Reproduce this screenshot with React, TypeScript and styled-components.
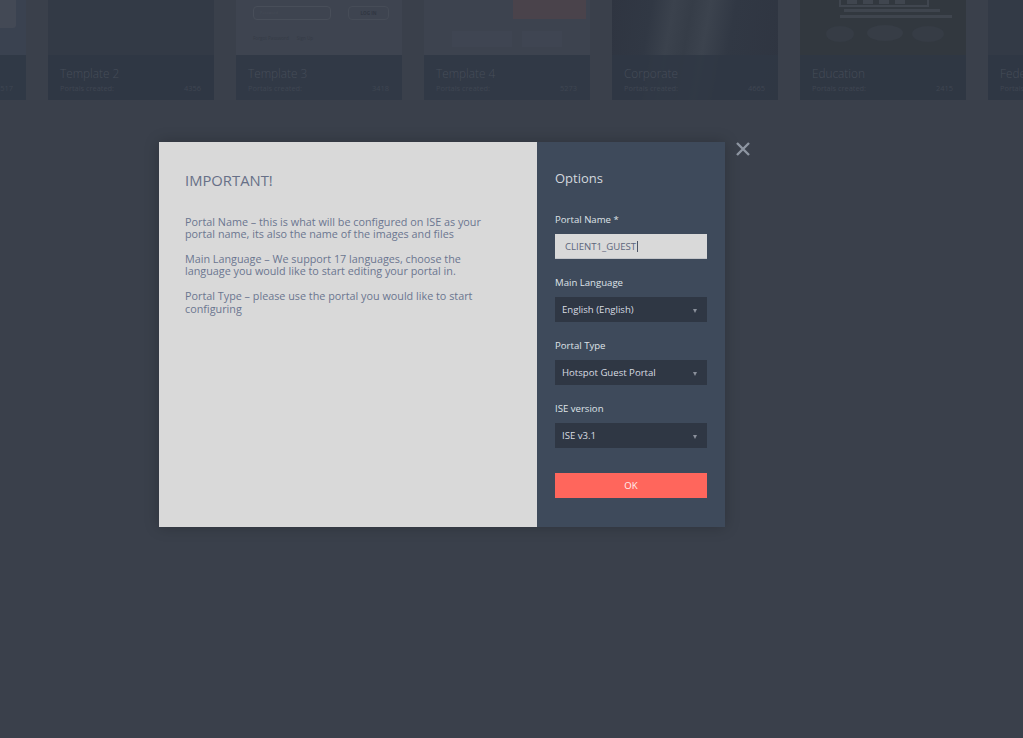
import React from "react";
import styled, { createGlobalStyle } from "styled-components";

const GlobalStyle = createGlobalStyle`
  html, body {
    margin: 0;
    padding: 0;
    background: #3a404b;
  }
  body {
    font-family: "Open Sans", "Liberation Sans", sans-serif;
    overflow: hidden;
  }
  * { box-sizing: border-box; }
`;

const Page = styled.div`
  position: relative;
  width: 1023px;
  height: 738px;
  overflow: hidden;
  background: #3a404b;
`;

/* ---------- background gallery ---------- */

const Gallery = styled.div`
  display: flex;
  gap: 22px;
  margin-left: -140px;
`;

const Card = styled.div<{ $bg: string }>`
  flex: 0 0 166px;
  height: 100px;
  display: flex;
  flex-direction: column;
  background: ${(p) => p.$bg};
  overflow: hidden;
`;

const Art = styled.div`
  height: 55px;
  display: flex;
  flex-direction: column;
`;

const Info = styled.div`
  flex: 1;
  padding: 11px 13px 0 12px;
  background: rgba(47, 55, 68, 0.85);
`;

const CardTitle = styled.div`
  font-size: 11.8px;
  line-height: 15px;
  font-weight: 300;
  color: #464d59;
  white-space: nowrap;
`;

const CardMeta = styled.div`
  display: flex;
  justify-content: space-between;
  margin-top: 1.6px;
  font-size: 7.4px;
  line-height: 10px;
  color: #3f4652;
  white-space: nowrap;
`;

/* card 1 thumbnail */
const PanelThumb = styled.div`
  width: 156px;
  height: 28px;
  background: #434955;
  border-bottom-right-radius: 3px;
`;

/* card 3 thumbnail : login form */
const LoginRow = styled.div`
  display: flex;
  gap: 17px;
  padding: 6px 0 0 17px;
`;

const MiniInput = styled.div`
  width: 78px;
  height: 14px;
  border: 1px solid #484e59;
  border-radius: 4px;
  font-size: 4px;
  line-height: 12px;
  padding-left: 6px;
  color: #454b56;
`;

const MiniButton = styled.div`
  width: 41px;
  height: 14px;
  border: 1px solid #464c57;
  border-radius: 4px;
  font-size: 4.6px;
  font-weight: 700;
  line-height: 12px;
  text-align: center;
  color: #303641;
`;

const MiniLinks = styled.div`
  display: flex;
  gap: 8px;
  padding: 15px 0 0 17px;
  font-size: 4.6px;
  color: #353b46;
`;

/* card 4 thumbnail : red button */
const RedRow = styled.div`
  display: flex;
  justify-content: flex-end;
  padding-right: 4px;
`;

const RedBlock = styled.div`
  width: 73px;
  height: 19px;
  background: #4a434b;
`;

const FaintRow = styled.div`
  display: flex;
  gap: 10px;
  padding: 12px 0 0 28px;
`;

const FaintBar = styled.div<{ $w: number }>`
  width: ${(p) => p.$w}px;
  height: 16px;
  background: rgba(70, 77, 88, 0.3);
`;

/* ---------- modal ---------- */

const Overlay = styled.div`
  position: fixed;
  inset: 0;
  display: flex;
  align-items: flex-start;
  padding: 142px 0 0 159px;
`;

const Modal = styled.div`
  position: relative;
  display: flex;
  box-shadow: 0 0 14px rgba(0, 0, 0, 0.22);
`;

const InfoPanel = styled.div`
  width: 378px;
  background: #d9d9d9;
  padding: 28px 36px 0 26px;
`;

const InfoHeading = styled.h2`
  margin: 0 0 25.5px;
  font-size: 14.8px;
  line-height: 20px;
  font-weight: 400;
  color: #677087;
`;

const InfoText = styled.p`
  margin: 0 0 12.9px;
  font-size: 10.8px;
  line-height: 12.3px;
  color: #6b7690;
`;

const OptionsPanel = styled.div`
  width: 188px;
  background: #3e4a5b;
  padding: 27px 18px 29px;
  display: flex;
  flex-direction: column;
`;

const OptionsTitle = styled.h3`
  margin: 0 0 26px;
  font-size: 13px;
  line-height: 18px;
  font-weight: 400;
  color: #d3d8de;
`;

const Field = styled.div`
  display: flex;
  flex-direction: column;
  margin-bottom: 17px;
  &:last-of-type { margin-bottom: 0; }
`;

const Label = styled.label`
  font-size: 9.6px;
  line-height: 14px;
  margin-bottom: 7px;
  color: #dfe3e8;
`;

const InputBox = styled.div`
  height: 25px;
  display: flex;
  align-items: center;
  padding: 0 10px;
  background: #d9d9d9;
  box-shadow: inset 0 -1px 0 #c3c5c9;
  font-size: 9.6px;
  color: #5d667c;
`;

const Caret = styled.span`
  display: inline-block;
  width: 1px;
  height: 11px;
  margin-left: 1px;
  background: #4d5566;
`;

const SelectBox = styled.div`
  height: 25px;
  display: flex;
  align-items: center;
  justify-content: space-between;
  padding: 0 10px 0 7px;
  background: #2f3744;
  font-size: 9.6px;
  color: #d8dce2;
`;

const Arrow = styled.span`
  width: 0;
  height: 0;
  margin-top: 3px;
  border-left: 2.5px solid transparent;
  border-right: 2.5px solid transparent;
  border-top: 4px solid #8a909b;
`;

const OkButton = styled.button`
  margin-top: 25px;
  height: 25px;
  width: 100%;
  border: none;
  background: #ff665c;
  color: #fff1ef;
  font-family: inherit;
  font-size: 9.6px;
  cursor: pointer;
`;

const CloseButton = styled.button`
  position: absolute;
  top: 0;
  right: -25px;
  width: 14px;
  height: 14px;
  padding: 0;
  border: none;
  background: none;
  cursor: pointer;
  display: flex;
`;

type CardData = {
  title: string;
  count: string;
  bg: string;
  art?: React.ReactNode;
};

const cards: CardData[] = [
  {
    title: "Template 1",
    count: "3517",
    bg: "#3a4250",
    art: <PanelThumb />,
  },
  { title: "Template 2", count: "4356", bg: "#333a46" },
  {
    title: "Template 3",
    count: "3418",
    bg: "#3e4450",
    art: (
      <>
        <LoginRow>
          <MiniInput>Password</MiniInput>
          <MiniButton>LOG IN</MiniButton>
        </LoginRow>
        <MiniLinks>
          <span>Forgot Password</span>
          <span>Sign Up</span>
        </MiniLinks>
      </>
    ),
  },
  {
    title: "Template 4",
    count: "5273",
    bg: "#3d434f",
    art: (
      <>
        <RedRow>
          <RedBlock />
        </RedRow>
        <FaintRow>
          <FaintBar $w={60} />
          <FaintBar $w={40} />
        </FaintRow>
      </>
    ),
  },
  {
    title: "Corporate",
    count: "4665",
    bg: "linear-gradient(100deg, #2f3541 0%, #313844 22%, #3b424d 34%, #363d48 44%, #3c434e 54%, #313844 68%, #2f3541 100%)",
  },
  {
    title: "Education",
    count: "2415",
    bg: "#32383f",
    art: (
      <svg width="166" height="55" viewBox="0 0 166 55">
        <rect x="40" y="-4" width="88" height="10" fill="none" stroke="#40464f" strokeWidth="2" />
        <rect x="47" y="-4" width="10" height="8" fill="#40464f" />
        <rect x="63" y="-4" width="10" height="8" fill="#40464f" />
        <rect x="79" y="-4" width="10" height="8" fill="#40464f" />
        <rect x="95" y="-4" width="10" height="8" fill="#40464f" />
        <rect x="44" y="9" width="96" height="3" fill="#3f454e" />
        <rect x="40" y="15" width="112" height="3" fill="#3f454e" />
        <ellipse cx="40" cy="34" rx="14" ry="8" fill="#363c45" />
        <ellipse cx="85" cy="33" rx="18" ry="8" fill="#373d46" />
        <ellipse cx="128" cy="34" rx="16" ry="8" fill="#363c45" />
      </svg>
    ),
  },
  { title: "Federal", count: "1903", bg: "#333a46" },
];

const fields = [
  { label: "Main Language", value: "English (English)" },
  { label: "Portal Type", value: "Hotspot Guest Portal" },
  { label: "ISE version", value: "ISE v3.1" },
];

export default function App() {
  return (
    <>
      <GlobalStyle />
      <Page>
        <Gallery>
          {cards.map((c) => (
            <Card key={c.title} $bg={c.bg}>
              <Art>{c.art}</Art>
              <Info>
                <CardTitle>{c.title}</CardTitle>
                <CardMeta>
                  <span>Portals created:</span>
                  <span>{c.count}</span>
                </CardMeta>
              </Info>
            </Card>
          ))}
        </Gallery>

        <Overlay>
          <Modal>
            <InfoPanel>
              <InfoHeading>IMPORTANT!</InfoHeading>
              <InfoText>
                Portal Name – this is what will be configured on ISE as your portal name, its also the name of the images and files
              </InfoText>
              <InfoText>
                Main Language – We support 17 languages, choose the language you would like to start editing your portal in.
              </InfoText>
              <InfoText>
                Portal Type – please use the portal you would like to start configuring
              </InfoText>
            </InfoPanel>
            <OptionsPanel>
              <OptionsTitle>Options</OptionsTitle>
              <Field>
                <Label>Portal Name *</Label>
                <InputBox>
                  CLIENT1_GUEST
                  <Caret />
                </InputBox>
              </Field>
              {fields.map((f) => (
                <Field key={f.label}>
                  <Label>{f.label}</Label>
                  <SelectBox>
                    <span>{f.value}</span>
                    <Arrow />
                  </SelectBox>
                </Field>
              ))}
              <OkButton>OK</OkButton>
            </OptionsPanel>
            <CloseButton aria-label="Close">
              <svg width="14" height="14" viewBox="0 0 14 14">
                <path d="M1 1 L13 13 M13 1 L1 13" stroke="#8d95a1" strokeWidth="2.4" strokeLinecap="butt" />
              </svg>
            </CloseButton>
          </Modal>
        </Overlay>
      </Page>
    </>
  );
}
